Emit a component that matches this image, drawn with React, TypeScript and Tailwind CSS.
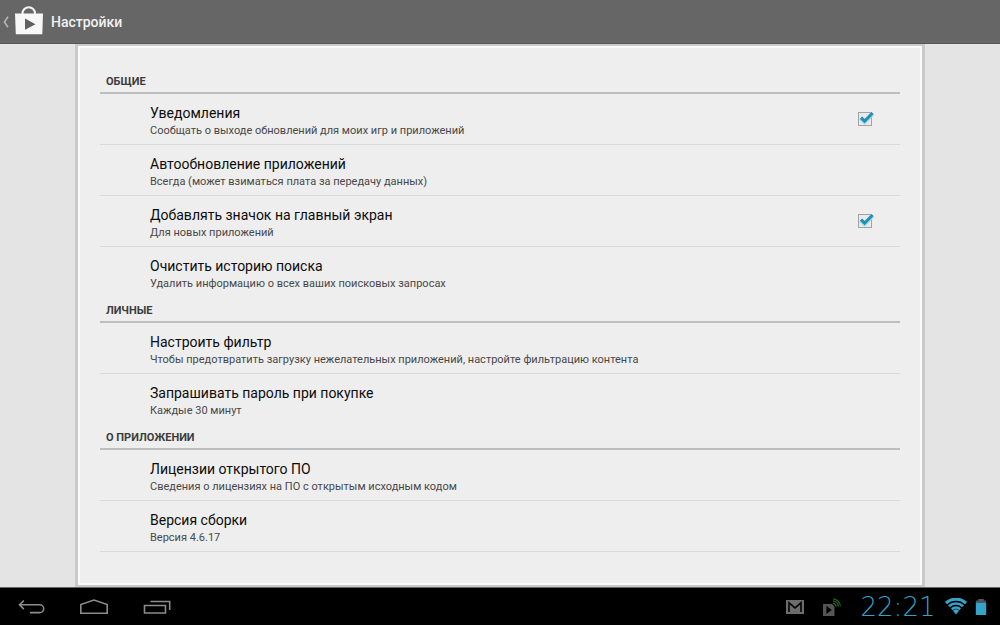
import { useId, useState } from 'react';

type Item = { title: string; note: string; toggle?: boolean };
type Section = { heading: string; items: Item[] };

const sections: Section[] = [
  {
    heading: 'ОБЩИЕ',
    items: [
      { title: 'Уведомления', note: 'Сообщать о выходе обновлений для моих игр и приложений', toggle: true },
      { title: 'Автообновление приложений', note: 'Всегда (может взиматься плата за передачу данных)' },
      { title: 'Добавлять значок на главный экран', note: 'Для новых приложений', toggle: true },
      { title: 'Очистить историю поиска', note: 'Удалить информацию о всех ваших поисковых запросах' },
    ],
  },
  {
    heading: 'ЛИЧНЫЕ',
    items: [
      { title: 'Настроить фильтр', note: 'Чтобы предотвратить загрузку нежелательных приложений, настройте фильтрацию контента' },
      { title: 'Запрашивать пароль при покупке', note: 'Каждые 30 минут' },
    ],
  },
  {
    heading: 'О ПРИЛОЖЕНИИ',
    items: [
      { title: 'Лицензии открытого ПО', note: 'Сведения о лицензиях на ПО с открытым исходным кодом' },
      { title: 'Версия сборки', note: 'Версия 4.6.17' },
    ],
  },
];

function ItemText({ title, note }: Item) {
  return (
    <span className="flex min-w-0 flex-1 flex-col pt-0.5">
      <span className="text-sm leading-5 text-[#0c0c0c]">{title}</span>
      <span className="text-[11px] leading-[15px] text-[#484848]">{note}</span>
    </span>
  );
}

function Row({ item, divided }: { item: Item; divided: boolean }) {
  const id = useId();
  const [checked, setChecked] = useState(true);
  const line = divided ? 'border-[#d9d9d9]' : 'border-transparent';
  return (
    <li className={`h-[51px] border-b ${line}`}>
      {item.toggle ? (
        <label htmlFor={id} className="flex h-full items-center pr-[26px] pl-[50px]">
          <ItemText {...item} />
          <span className="relative flex size-4 items-center">
            <input
              id={id}
              type="checkbox"
              checked={checked}
              onChange={(e) => setChecked(e.target.checked)}
              className="peer size-[14px] appearance-none border border-[#a3a3a3] bg-[#eaeaea]"
            />
            <svg viewBox="0 0 16 16" className="pointer-events-none absolute inset-0 hidden size-4 peer-checked:block" fill="none">
              <path d="M2.6 7 6.6 10.8 14.6 2.6" stroke="#a5d9ea" strokeWidth="4.4" />
              <path d="M3 6.7 6.6 10.2 14.6 2" stroke="#238fb5" strokeWidth="3" />
            </svg>
          </span>
        </label>
      ) : (
        <button type="button" className="flex h-full w-full items-center pr-[26px] pl-[50px] text-left">
          <ItemText {...item} />
        </button>
      )}
    </li>
  );
}

function StoreBag() {
  return (
    <svg viewBox="0 0 28 30" className="h-[30px] w-7" aria-hidden="true">
      <path d="M7.5 9V7.5a6 6 0 0 1 12.5 0V9" fill="none" stroke="#f4f4f4" strokeWidth="2" />
      <path d="M0 7.5h28l-.7 20.7H.8Z" fill="#f7f7f7" />
      <path d="M10 12.5v11.3l10.5-5.6Z" fill="#5f5f5f" />
    </svg>
  );
}

function Header() {
  return (
    <header className="flex h-11 shrink-0 items-center border-b border-[#565656] bg-[#666] pl-[3px]">
      <a href="#back" className="flex items-center gap-1.5" aria-label="Назад">
        <svg viewBox="0 0 6 12" className="h-3 w-1.5" fill="none" aria-hidden="true">
          <path d="M5 .8 1.4 6 5 11.2" stroke="#b4b4b4" strokeWidth="1.6" />
        </svg>
        <span className="pb-0.5">
          <StoreBag />
        </span>
      </a>
      <h1 className="ml-2 text-sm font-medium text-[#f2f2f2]">Настройки</h1>
    </header>
  );
}

function SystemBar() {
  return (
    <footer className="flex h-[38px] shrink-0 items-center justify-between border-t border-[#666] bg-black pr-[13px] pl-[18px]">
      <nav className="flex items-center gap-[34px] text-[#8c8c8c]">
        <button type="button" aria-label="Назад">
          <svg viewBox="0 0 28 16" className="h-4 w-7" fill="none" stroke="currentColor" strokeWidth="1.6">
            <path d="M5.8 1.6 1.5 5.8l4.3 4.3M1.5 5.8h20.3a3.9 3.9 0 0 1 0 7.8H12" />
          </svg>
        </button>
        <button type="button" aria-label="Домой">
          <svg viewBox="0 0 28 16" className="h-4 w-7" fill="none" stroke="currentColor" strokeWidth="1.6">
            <path d="M.8 14.3V5.5L14 1.1l13.2 4.4v8.8Z" />
          </svg>
        </button>
        <button type="button" aria-label="Недавние">
          <svg viewBox="0 0 30 16" className="h-4 w-[30px]" fill="none" stroke="currentColor" strokeWidth="1.6">
            <path d="M2.5 6.5h21v7.5h-21ZM8.5 2.5h19.2v8.4" />
          </svg>
        </button>
      </nav>
      <div className="flex items-center">
        <svg viewBox="0 0 18 14" className="h-3.5 w-[18px]" aria-hidden="true">
          <path d="M0 0h18v14H0Z" fill="#6c6c6c" />
          <path d="M3 12V2.8L9 8l6-5.2V12" fill="none" stroke="#080808" strokeWidth="1.7" />
        </svg>
        <svg viewBox="0 0 18 18" className="mr-4 ml-[19px] h-[18px] w-[18px]" aria-hidden="true">
          <path d="M0 6h8.8a5 5 0 0 1 2.7 3V18H0Z" fill="#555" />
          <path d="M3.3 7.8v8.2l5.6-4.1Z" fill="#050505" />
          <path d="M9.8 5.2a4 4 0 0 1 3.4 3.6M10 2.8a6.2 6.2 0 0 1 5.4 5.8M10.2.8a8 8 0 0 1 7.2 7.6" fill="none" stroke="#29601f" strokeWidth="1.2" />
        </svg>
        <time className="min-w-[82px] text-center font-['DejaVu_Sans',sans-serif] text-[26px] leading-8 font-extralight text-[#2fa3c9]">22:21</time>
        <svg viewBox="0 0 22 17" className="ml-1.5 h-[17px] w-[22px]" fill="none" stroke="#35a4ca" aria-hidden="true">
          <path d="M1 5a15 15 0 0 1 20 0" strokeWidth="3.2" />
          <path d="M4 8.2a10.6 10.6 0 0 1 14 0M6.8 11.2a6.4 6.4 0 0 1 8.4 0" strokeWidth="2.6" />
          <path d="m11 16.5-3-3.8a4.4 4.4 0 0 1 6 0Z" fill="#35a4ca" stroke="none" />
        </svg>
        <svg viewBox="0 0 12 16" className="ml-2 h-4 w-3" aria-hidden="true">
          <path d="M3.2 0h5.6v1.5H11v2H1v-2h2.2Z" fill="#555" />
          <path d="M.8 3.5h10.4V16H.8Z" fill="#35a4ca" />
        </svg>
      </div>
    </footer>
  );
}

export default function App() {
  return (
    <div className="flex min-h-screen flex-col bg-[#e4e4e4] font-[Roboto,'Noto_Sans',sans-serif]">
      <Header />
      <main className="mx-[75px] flex flex-1 flex-col border-x-[3px] border-t-2 border-b-2 border-[#c9c9c9]">
        <div className="flex-1 border-2 border-[#fafafa] bg-[#eee] px-5 pt-[21px] pb-6">
          {sections.map((section, s) => (
            <section key={section.heading}>
              <h2 className="h-[25px] border-b-2 border-[#bebebe] pl-1.5 text-[11px] leading-[26px] font-bold text-[#3c3c3c]">
                {section.heading}
              </h2>
              <ul>
                {section.items.map((item, i) => (
                  <Row key={item.title} item={item} divided={i < section.items.length - 1 || s === sections.length - 1} />
                ))}
              </ul>
            </section>
          ))}
        </div>
      </main>
      <SystemBar />
    </div>
  );
}
